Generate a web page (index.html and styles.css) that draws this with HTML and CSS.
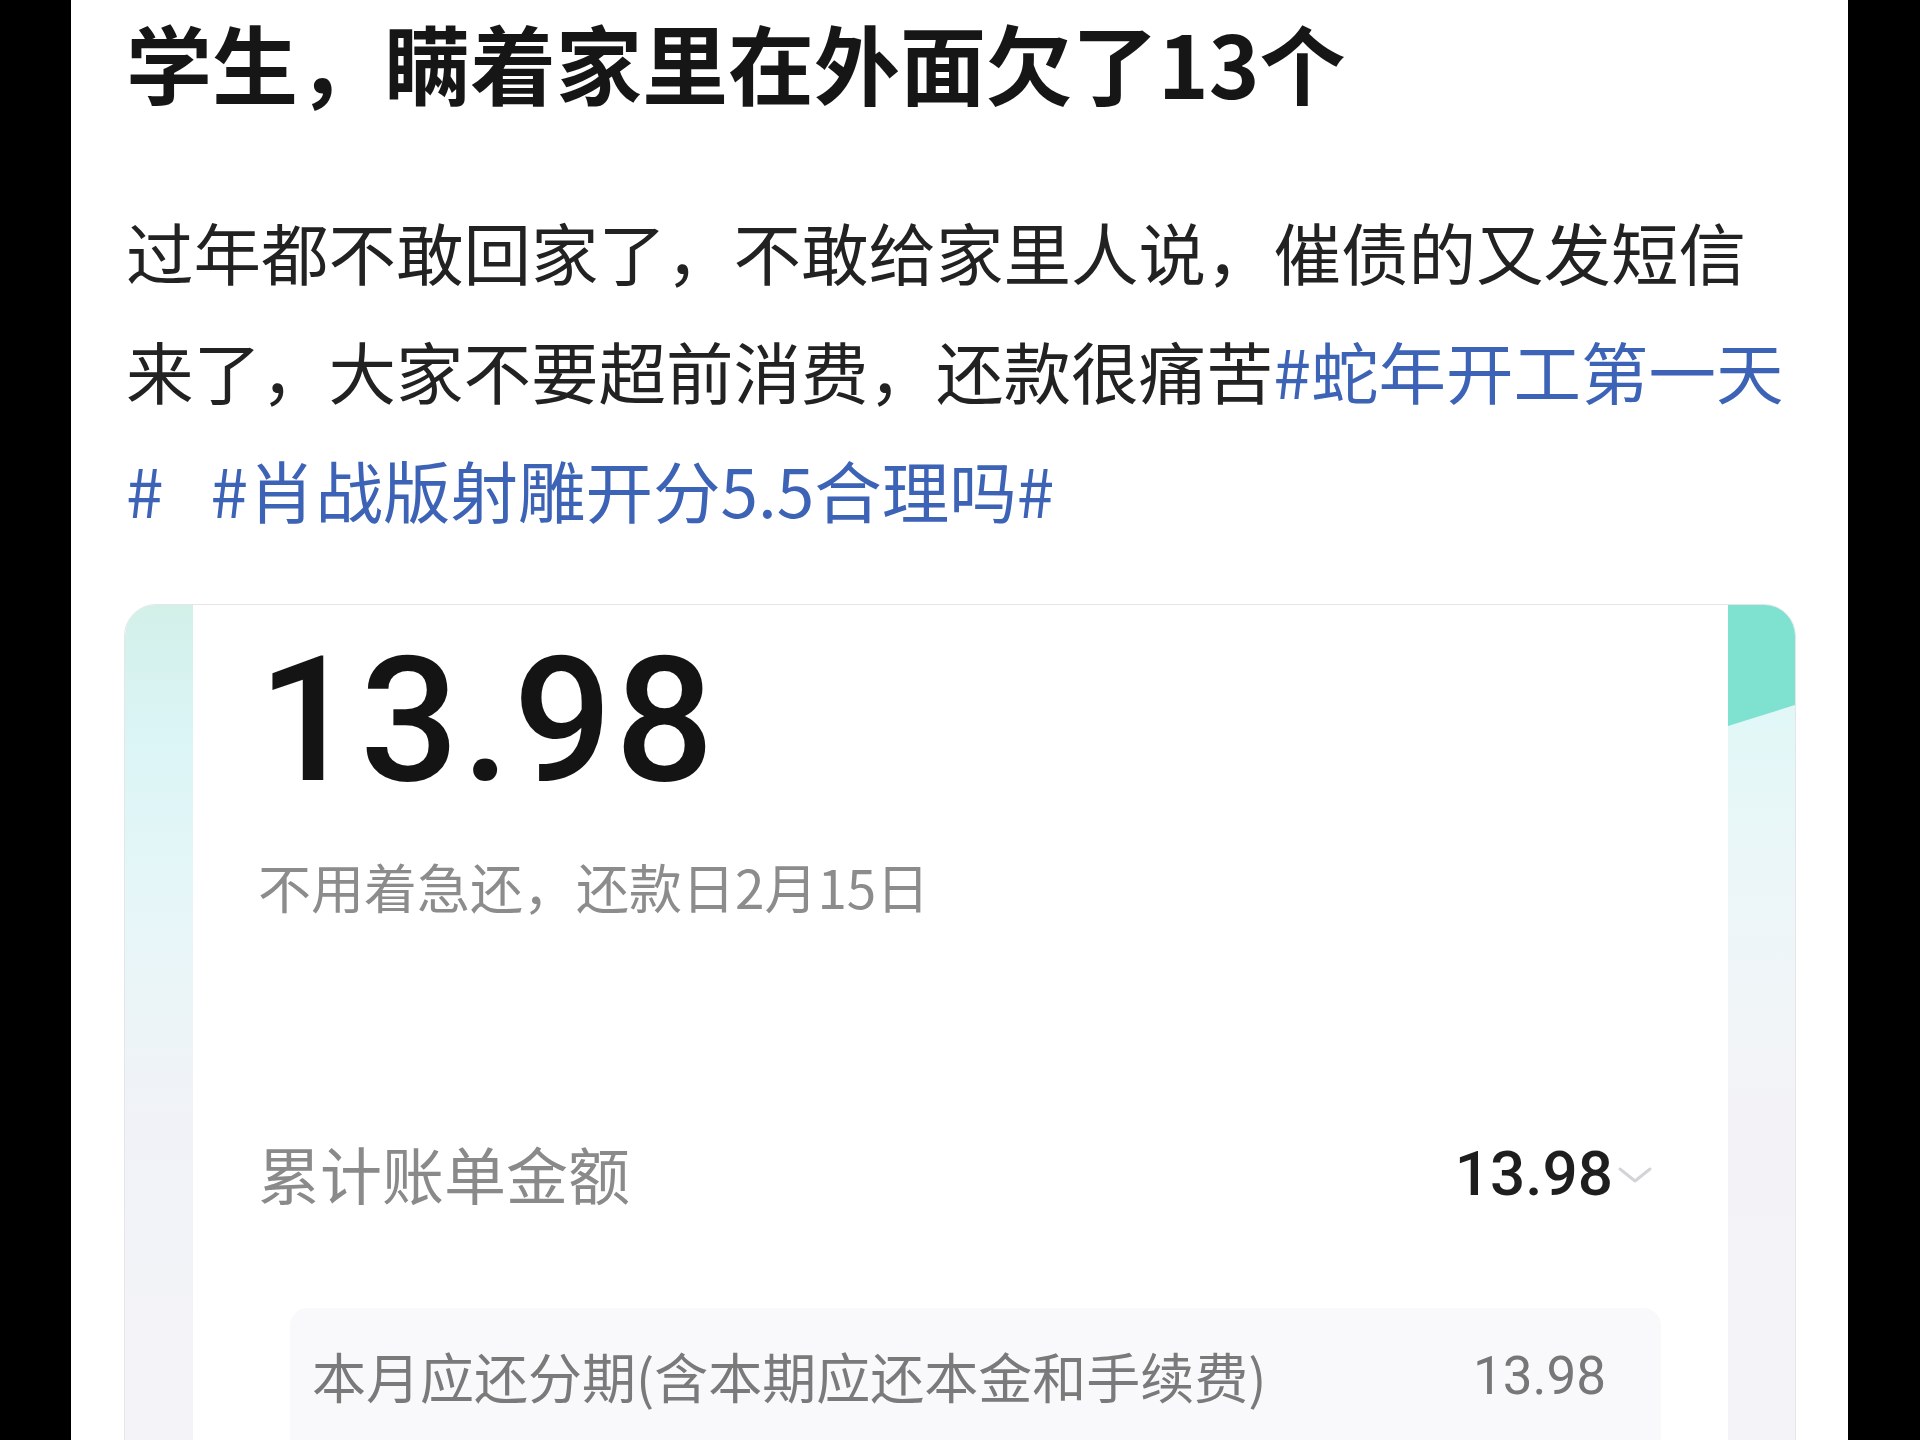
FILE: index.html
```html
<!DOCTYPE html>
<html lang="zh-CN">
<head>
<meta charset="UTF-8" />
<meta name="viewport" content="width=device-width, initial-scale=1" />
<title>学生，瞒着家里在外面欠了13个</title>
<link rel="stylesheet" href="styles.css">
</head>
<body>

<div class="page">

  <h1 class="post-title">学生，瞒着家里在外面欠了13个</h1>
  <p class="post-text">过年都不敢回家了，不敢给家里人说，催债的又发短信来了，大家不要超前消费，还款很痛苦<a class="tag">#蛇年开工第一天#</a> <a class="tag second">#肖战版射雕开分5.5合理吗#</a></p>

  <div class="shot">
    <div class="shot-side left"></div>

    <div class="shot-main">
      <div class="bill-amount">13.98</div>
      <div class="bill-note">不用着急还，还款日2月15日</div>

      <div class="bill-row">
        <span class="bill-label">累计账单金额</span>
        <span class="bill-total">13.98
          <svg class="chevron" width="36" height="18" viewBox="0 0 36 18"><polyline points="3,3 18,15 33,3" fill="none" stroke="#d4d4d8" stroke-width="3" stroke-linecap="round" stroke-linejoin="round"/></svg>
        </span>
      </div>

      <div class="bill-detail">
        <span class="detail-label">本月应还分期(含本期应还本金和手续费)</span>
        <span class="detail-num">13.98</span>
      </div>
    </div>

    <div class="shot-side right"><div class="teal"></div></div>
  </div>

</div>

</body>
</html>
```

FILE: styles.css
```css
body {
  margin: 0;
  background: #000;
  font-family: "Noto Sans CJK SC", "Noto Sans", sans-serif;
}
.page {
  margin: 0 72px 0 71px;
  height: 1440px;
  background: #fff;
  padding: 7px 53px 0 55px;
  box-sizing: border-box;
  overflow: hidden;
}
.post-title {
  margin: 0;
  font-size: 86px;
  line-height: 110px;
  font-weight: 700;
  color: #161616;
}
.post-text {
  margin: 74px 0 0;
  font-size: 67.5px;
  line-height: 119px;
  color: #222;
}
.tag {
  color: #3d63b6;
}
.tag.second {
  margin-left: 32px;
}

/* screenshot card */
.shot {
  display: grid;
  grid-template-columns: 68px 1fr 67px;
  margin: 56px -1px 0 -2px;
  border: 1px solid #e6e6ea;
  border-radius: 32px 32px 0 0;
  overflow: hidden;
  height: 900px;
}
.shot-side.left {
  background: linear-gradient(180deg, #d2f0e8 0, #daf4f5 120px, #e6f6f8 300px, #f1f2f7 520px, #f4f4f8 100%);
}
.shot-side.right {
  background: linear-gradient(180deg, #e0f7f6 0, #e2f7f7 120px, #ecf6f8 280px, #f3f3f7 500px, #f4f4f8 100%);
}
.teal {
  height: 121px;
  background: #7fe1cf;
  clip-path: polygon(0 0, 100% 0, 100% 100px, 0 121px);
}
.shot-main {
  background: #fff;
  padding: 24px 0 0 65px;
}
.bill-amount {
  font-family: Roboto, sans-serif;
  font-size: 174px;
  line-height: 184px;
  font-weight: 500;
  letter-spacing: 3px;
  color: #141414;
}
.bill-note {
  margin-top: 38px;
  font-size: 53px;
  line-height: 70px;
  color: #8c8c8c;
}
.bill-row {
  display: flex;
  justify-content: space-between;
  align-items: center;
  height: 80px;
  margin-top: 212px;
  padding-right: 75px;
}
.bill-label {
  font-size: 62px;
  color: #8a8a8a;
}
.bill-total {
  display: flex;
  align-items: center;
  gap: 4px;
  font-family: Roboto, sans-serif;
  font-size: 62px;
  font-weight: 500;
  color: #1e1e1e;
}
.chevron {
  margin-top: 4px;
}
.bill-detail {
  display: flex;
  justify-content: space-between;
  margin: 95px 67px 0 32px;
  padding: 33px 55px 0 22px;
  height: 200px;
  background: #f9f8fa;
  border-radius: 18px;
}
.detail-label {
  font-size: 54px;
  line-height: 70px;
  color: #7a7a7a;
}
.detail-num {
  font-family: Roboto, sans-serif;
  font-size: 53px;
  line-height: 70px;
  color: #777;
}
```
